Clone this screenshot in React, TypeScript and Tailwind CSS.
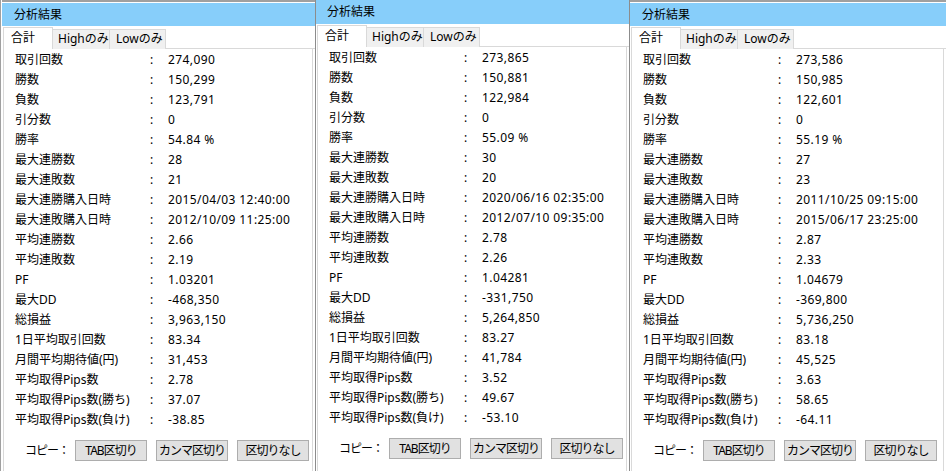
const labels = [
  "取引回数",
  "勝数",
  "負数",
  "引分数",
  "勝率",
  "最大連勝数",
  "最大連敗数",
  "最大連勝購入日時",
  "最大連敗購入日時",
  "平均連勝数",
  "平均連敗数",
  "PF",
  "最大DD",
  "総損益",
  "1日平均取引回数",
  "月間平均期待値(円)",
  "平均取得Pips数",
  "平均取得Pips数(勝ち)",
  "平均取得Pips数(負け)",
];

const panels = [
  {
    values: ["274,090", "150,299", "123,791", "0", "54.84 %", "28", "21", "2015/04/03 12:40:00", "2012/10/09 11:25:00", "2.66", "2.19", "1.03201", "-468,350", "3,963,150", "83.34", "31,453", "2.78", "37.07", "-38.85"],
    outer: "w-[316px] border-l border-l-[#a0a0a0] pl-[1px] border-r border-r-[#8c8c8c]",
    raised: false,
  },
  {
    values: ["273,865", "150,881", "122,984", "0", "55.09 %", "30", "20", "2020/06/16 02:35:00", "2012/07/10 09:35:00", "2.78", "2.26", "1.04281", "-331,750", "5,264,850", "83.27", "41,784", "3.52", "49.67", "-53.10"],
    outer: "w-[314px] border-r border-r-[#8c8c8c]",
    raised: true,
  },
  {
    values: ["273,586", "150,985", "122,601", "0", "55.19 %", "27", "23", "2011/10/25 09:15:00", "2015/06/17 23:25:00", "2.87", "2.33", "1.04679", "-369,800", "5,736,250", "83.18", "45,525", "3.63", "58.65", "-64.11"],
    outer: "flex-1",
    raised: false,
  },
];

function Panel({ values, outer, raised }: { values: string[]; outer: string; raised: boolean }) {
  return (
    <div className={`flex flex-col bg-white ${outer}`}>
      {raised ? (
        <div className="h-[24px] bg-[#87cefa] pl-[11px] leading-[24px]">分析結果</div>
      ) : (
        <>
          <div className="h-[3px] border-t-2 border-t-[#a0a0a0]" />
          <div className="h-[23px] bg-[#87cefa] pl-[12px] leading-[23px]">分析結果</div>
        </>
      )}
      <div className="ml-[1px] mt-[1px] flex h-[22px] items-end">
        <div className="h-[22px] w-[50px] border-l border-r border-t border-[#d9d9d9] bg-white pl-[7px] leading-[20px]">合計</div>
        <div className="flex h-[20px] flex-1 items-start border-b border-[#d9d9d9]">
          <div className="h-[20px] w-[57px] border-r border-t border-[#d9d9d9] bg-[#f0f0f0] pl-[5px] leading-[18px]">Highのみ</div>
          <div className="h-[20px] w-[56px] border-r border-t border-[#d9d9d9] bg-[#f0f0f0] pl-[6px] leading-[18px]">Lowのみ</div>
        </div>
      </div>
      <div className="ml-[1px] mr-[2px] flex flex-1 flex-col border-l border-r border-[#d9d9d9] pt-[1px]">
        {labels.map((label, i) => (
          <div key={label} className="flex h-[20px] items-center pl-[11px]">
            <span className="w-[135px]">{label}</span>
            <span className="w-[18px]">:</span>
            <span className="tracking-[0.4px]">{values[i]}</span>
          </div>
        ))}
        <div className="mt-[10px] flex items-center">
          <span className="ml-[21px] w-[50px] whitespace-nowrap tracking-[-1px]">コピー：</span>
          <div className="flex gap-[9px]">
            {["TAB区切り", "カンマ区切り", "区切りなし"].map((b) => (
              <div key={b} className="flex h-[21px] w-[72px] items-center justify-center whitespace-nowrap border border-[#adadad] bg-[#e1e1e1] tracking-[-1px]">
                {b}
              </div>
            ))}
          </div>
        </div>
      </div>
    </div>
  );
}

export default function App() {
  return (
    <div
      className="flex h-[471px] w-[946px] overflow-hidden bg-white text-[12px] text-black"
      style={{ fontFamily: '"Noto Sans", "Noto Sans CJK JP", sans-serif' }}
    >
      {panels.map((p, i) => (
        <Panel key={i} values={p.values} outer={p.outer} raised={p.raised} />
      ))}
    </div>
  );
}
